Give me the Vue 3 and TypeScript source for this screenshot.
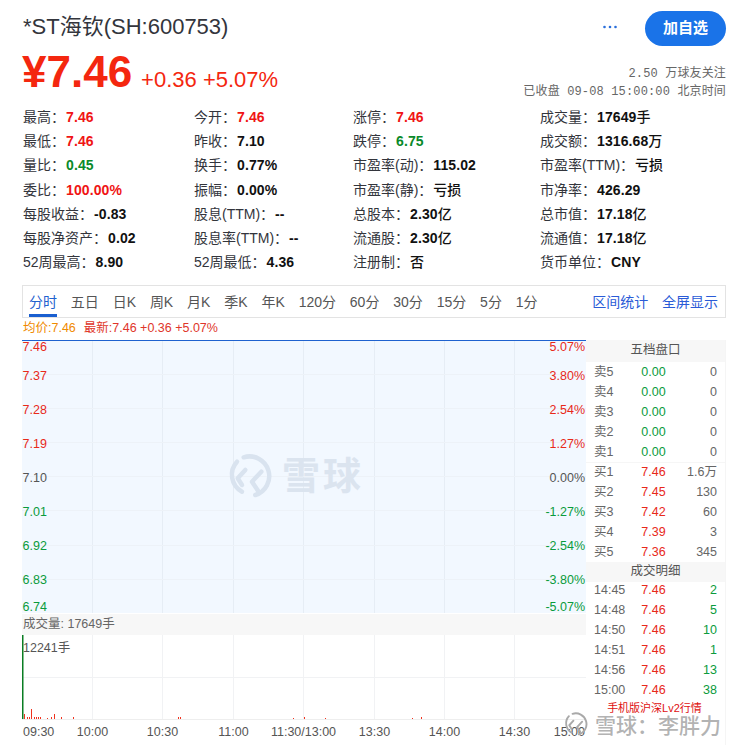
<script setup lang="ts">
interface Stat { label: string; value: string; tone?: string }

const stats: Stat[] = [
  { label: '最高', value: '7.46', tone: 'up' }, { label: '今开', value: '7.46', tone: 'up' }, { label: '涨停', value: '7.46', tone: 'up' }, { label: '成交量', value: '17649手' },
  { label: '最低', value: '7.46', tone: 'up' }, { label: '昨收', value: '7.10' }, { label: '跌停', value: '6.75', tone: 'down' }, { label: '成交额', value: '1316.68万' },
  { label: '量比', value: '0.45', tone: 'down' }, { label: '换手', value: '0.77%' }, { label: '市盈率(动)', value: '115.02' }, { label: '市盈率(TTM)', value: '亏损' },
  { label: '委比', value: '100.00%', tone: 'up' }, { label: '振幅', value: '0.00%' }, { label: '市盈率(静)', value: '亏损' }, { label: '市净率', value: '426.29' },
  { label: '每股收益', value: '-0.83' }, { label: '股息(TTM)', value: '--' }, { label: '总股本', value: '2.30亿' }, { label: '总市值', value: '17.18亿' },
  { label: '每股净资产', value: '0.02' }, { label: '股息率(TTM)', value: '--' }, { label: '流通股', value: '2.30亿' }, { label: '流通值', value: '17.18亿' },
  { label: '52周最高', value: '8.90' }, { label: '52周最低', value: '4.36' }, { label: '注册制', value: '否' }, { label: '货币单位', value: 'CNY' },
]

const num = (v: string): string => v.replace(/[^\x00-\x7f]+/g, '')
const unit = (v: string): string => v.replace(/[\x00-\x7f]+/g, '')

const tabs = ['分时', '五日', '日K', '周K', '月K', '季K', '年K', '120分', '60分', '30分', '15分', '5分', '1分']

const vLines = [70.5, 140.5, 211.5, 281.5, 352.5, 422.5, 492.5]
const hLines = [34, 68, 102, 136, 170, 205, 239]
const priceRows = [
  { y: 7, p: '7.46', c: '5.07%', t: 'r' }, { y: 35.5, p: '7.37', c: '3.80%', t: 'r' }, { y: 70, p: '7.28', c: '2.54%', t: 'r' },
  { y: 104, p: '7.19', c: '1.27%', t: 'r' }, { y: 138, p: '7.10', c: '0.00%', t: 'n' }, { y: 172, p: '7.01', c: '-1.27%', t: 'g' },
  { y: 206, p: '6.92', c: '-2.54%', t: 'g' }, { y: 240, p: '6.83', c: '-3.80%', t: 'g' }, { y: 267, p: '6.74', c: '-5.07%', t: 'g' },
]

const bars: [number, number][] = [
  [2, 5], [5, 2], [7, 2], [9, 10], [12, 2], [14, 2], [16, 2], [18, 2], [25, 1], [29, 2], [32, 5], [39, 2], [51, 2],
  [156, 2], [158, 2], [271, 1], [282, 2], [303, 1], [390, 1], [399, 2],
]
const axis = [
  { x: 70.5, t: '10:00' }, { x: 140.5, t: '10:30' }, { x: 211.5, t: '11:00' }, { x: 281.5, t: '11:30/13:00' },
  { x: 352.5, t: '13:30' }, { x: 422.5, t: '14:00' }, { x: 492.5, t: '14:30' },
]

const sells = ['卖5', '卖4', '卖3', '卖2', '卖1'].map((l) => ({ l, p: '0.00', v: '0' }))
const buys = [
  { l: '买1', p: '7.46', v: '1.6万' }, { l: '买2', p: '7.45', v: '130' }, { l: '买3', p: '7.42', v: '60' },
  { l: '买4', p: '7.39', v: '3' }, { l: '买5', p: '7.36', v: '345' },
]
const deals = [
  { l: '14:45', v: '2' }, { l: '14:48', v: '5' }, { l: '14:50', v: '10' },
  { l: '14:51', v: '1' }, { l: '14:56', v: '13' }, { l: '15:00', v: '38' },
]
</script>

<template>
  <div class="page">
    <header class="head">
      <h1 class="title">*ST海钦(SH:600753)</h1>
      <div class="actions">
        <svg class="more" width="16" height="4" viewBox="0 0 16 4"><circle cx="2.5" cy="2" r="1.3" /><circle cx="8" cy="2" r="1.3" /><circle cx="13.5" cy="2" r="1.3" /></svg>
        <button class="follow">加自选</button>
      </div>
    </header>

    <section class="quote">
      <div class="price-line">
        <span class="price">¥7.46</span>
        <span class="change">+0.36 +5.07%</span>
      </div>
      <div class="meta">
        <div>2.50 万球友关注</div>
        <div>已收盘 09-08 15:00:00 北京时间</div>
      </div>
    </section>

    <section class="stats">
      <div v-for="s in stats" :key="s.label" class="stat">
        <span>{{ s.label }}：</span><b :class="s.tone">{{ num(s.value) }}</b><span class="unit">{{ unit(s.value) }}</span>
      </div>
    </section>

    <nav class="tabs">
      <a v-for="(t, i) in tabs" :key="t" class="tab" :class="{ active: i === 0 }">{{ t }}</a>
      <span class="spacer"></span>
      <a class="tool">区间统计</a>
      <a class="tool">全屏显示</a>
    </nav>

    <div class="legend"><span class="avg">均价:7.46</span><span class="last">最新:7.46 +0.36 +5.07%</span></div>

    <section class="board">
      <div class="charts">
        <svg class="plot" width="564" height="273" viewBox="0 0 564 273">
          <rect width="564" height="273" fill="#f2f8ff" />
          <line v-for="x in vLines" :key="x" :x1="x" :x2="x" y1="0" y2="273" stroke="#e6edf5" />
          <line v-for="y in hLines" :key="y" x1="0" x2="564" :y1="y + 0.5" :y2="y + 0.5" stroke="#edf2f8" />
          <line x1="0" x2="564" y1="0.5" y2="0.5" stroke="#1f62cf" />
          <g v-for="r in priceRows" :key="r.p" :class="'lbl-' + r.t">
            <text x="0.5" :y="r.y" class="axis-text">{{ r.p }}</text>
            <text x="563" :y="r.y" text-anchor="end" class="axis-text">{{ r.c }}</text>
          </g>
        </svg>
        <div class="vol-head">成交量: 17649手</div>
        <svg class="plot" width="564" height="109" viewBox="0 0 564 109">
          <line v-for="x in vLines" :key="x" :x1="x" :x2="x" y1="0" y2="84" stroke="#f1f2f4" />
          <line x1="0" x2="564" y1="42.5" y2="42.5" stroke="#f1f2f4" />
          <line x1="0" x2="564" y1="84.5" y2="84.5" stroke="#eeeeee" />
          <rect x="0" y="0" width="1.5" height="84" fill="#0a7d23" />
          <rect v-for="b in bars" :key="b[0]" :x="b[0]" :y="84 - b[1]" width="1" :height="b[1]" fill="#f0331f" />
          <text x="1" y="13" class="axis-text vol-text">12241手</text>
          <text x="1" y="97" class="axis-text vol-text">09:30</text>
          <text v-for="a in axis" :key="a.t" :x="a.x" y="97" text-anchor="middle" class="axis-text vol-text">{{ a.t }}</text>
          <text x="563" y="97" text-anchor="end" class="axis-text vol-text">15:00</text>
        </svg>
      </div>

      <aside class="side">
        <div class="side-head">五档盘口</div>
        <div v-for="r in sells" :key="r.l" class="row">
          <span class="c1">{{ r.l }}</span><span class="c2 green">{{ r.p }}</span><span class="c3">{{ r.v }}</span>
        </div>
        <div class="sep"></div>
        <div v-for="r in buys" :key="r.l" class="row">
          <span class="c1">{{ r.l }}</span><span class="c2 red">{{ r.p }}</span><span class="c3">{{ r.v }}</span>
        </div>
        <div class="side-head second">成交明细</div>
        <div v-for="r in deals" :key="r.l" class="row">
          <span class="c1">{{ r.l }}</span><span class="c2 red">7.46</span><span class="c3 green">{{ r.v }}</span>
        </div>
        <div class="promo">手机版沪深Lv2行情</div>
      </aside>
    </section>

    <div class="mark-center">
      <svg width="44" height="44" viewBox="0 0 44 44" fill="none" stroke="#d9e3ef" stroke-width="4.5" stroke-linecap="round" stroke-linejoin="round">
        <path d="M9 7.7 A19.3 19.3 0 0 0 14 37.7" />
        <path d="M15.7 3.3 A19.5 19.5 0 1 1 27.3 41" />
        <path d="M17.3 16 L9.7 24.3 L14 31" />
        <path d="M33.3 17.7 L24 27.7 L30 36.7" />
      </svg>
      <span>雪球</span>
    </div>

    <div class="mark-corner">
      <svg width="26" height="24" viewBox="0 0 44 44" fill="none" stroke="#a9a9a9" stroke-width="3.5" stroke-linecap="round" stroke-linejoin="round">
        <path d="M9 7.7 A19.3 19.3 0 0 0 14 37.7" />
        <path d="M15.7 3.3 A19.5 19.5 0 1 1 27.3 41" />
        <path d="M17.3 16 L9.7 24.3 L14 31" />
        <path d="M33.3 17.7 L24 27.7 L30 36.7" />
      </svg>
      <span>雪球：李胖力</span>
    </div>
  </div>
</template>

<style>
html, body { background: #fff; }
</style>

<style scoped>
.page {
  position: relative;
  width: 744px;
  height: 745px;
  overflow: hidden;
  box-sizing: border-box;
  padding: 11px 18px 0 22px;
  font-family: "Liberation Sans", "Noto Sans CJK SC", sans-serif;
  color: #333;
}
.head { display: flex; justify-content: space-between; align-items: center; height: 35px; }
.title { margin: -3px 0 0 1px; font-size: 22px; font-weight: 400; line-height: 32px; color: #33353c; }
.actions { display: flex; align-items: center; gap: 27px; }
.more { fill: #2a6fdb; margin-top: -4px; }
.follow {
  width: 81px; height: 35px; border: 0; border-radius: 18px; background: #1a73e8; color: #fff;
  font: 700 15px "Liberation Sans", "Noto Sans CJK SC", sans-serif; padding: 0 0 4px;
}
.quote { display: flex; justify-content: space-between; height: 59px; }
.price-line { display: flex; align-items: baseline; gap: 9px; height: 50px; }
.price { font-size: 44px; line-height: 52px; font-weight: 700; color: #f4270f; }
.change { font-size: 22px; color: #f4270f; }
.meta {
  text-align: right; padding-top: 20px; font-family: "Liberation Mono", "Noto Sans CJK SC", monospace;
  font-size: 12px; line-height: 17.5px; color: #666; letter-spacing: 0.15px;
}
.stats {
  display: grid; grid-template-columns: 171px 159px 187px 186px; grid-auto-rows: 24.2px;
  padding-left: 1px; font-size: 14px; color: #33353c;
}
.stat { line-height: 24.2px; white-space: nowrap; }
.stat b { color: #111; margin-left: 1px; letter-spacing: 0.1px; }
.stat b.up { color: #f01414; }
.stat b.down { color: #0a8a2a; }
.unit { color: #111; font-weight: 500; }
.tabs {
  display: flex; align-items: flex-start; gap: 13.85px; height: 33px; box-sizing: border-box; margin-top: 11px;
  border: 1px solid #e3e3e3; padding: 0 7px 0 6px; font-size: 14px; line-height: 32px; color: #555;
}
.tab { white-space: nowrap; height: 31px; box-sizing: border-box; }
.tab.active { color: #1f62cf; border-bottom: 3px solid #1a5fd0; }
.spacer { flex: 1; }
.tool { color: #2a5bd7; }
.legend { display: flex; gap: 8px; height: 22px; padding-left: 1px; font-size: 12.5px; line-height: 20px; }
.avg { color: #f08a00; }
.last { color: #e0362a; }
.board { display: flex; height: 405px; }
.charts { width: 564px; flex: none; }
.plot { display: block; overflow: visible; }
.axis-text { font-size: 12.5px; dominant-baseline: central; }
.lbl-r { fill: #e8291a; }
.lbl-n { fill: #555; }
.lbl-g { fill: #0a9b3c; }
.vol-text { fill: #555; }
.vol-head {
  height: 21px; margin-top: 1px; background: #f7f7f7; font-size: 12.5px; line-height: 20px;
  padding-left: 1px; color: #666;
}
.side { width: 140px; flex: none; font-size: 12.5px; color: #666; background: #fff; box-sizing: border-box; border-right: 1px solid #f5f5f5; }
.side-head { height: 22px; background: #f7f7f7; text-align: center; font-size: 12.5px; line-height: 21px; color: #555; }
.side-head.second { height: 20px; line-height: 18px; margin-bottom: -2px; }
.row { display: grid; grid-template-columns: 42px 35px 46px; height: 20px; line-height: 20px; padding-left: 8px; position: relative; }
.c1 { white-space: nowrap; }
.c2 { text-align: center; }
.c3 { text-align: right; }
.green { color: #0a9b3c; }
.red { color: #e8291a; }
.sep { height: 0; border-top: 1px solid #f6f6f6; margin-bottom: -1px; }
.promo { text-align: center; font-size: 11px; line-height: 17px; color: #e01010; padding-right: 2px; }
.mark-center {
  position: absolute; left: 228px; top: 454px; display: flex; align-items: center; gap: 10px; height: 44px;
  font-size: 38px; font-weight: 700; letter-spacing: 3px; color: #dbe4ef;
}
.mark-center span { line-height: 44px; }
.mark-corner {
  position: absolute; left: 563px; top: 710px; display: flex; align-items: center; gap: 6px; height: 27px;
  font-size: 21px; font-weight: 500; color: rgba(165, 165, 165, 0.85); white-space: nowrap;
  text-shadow: 0 0 2px #fff, 1px 1px 1px #fff;
}
</style>
